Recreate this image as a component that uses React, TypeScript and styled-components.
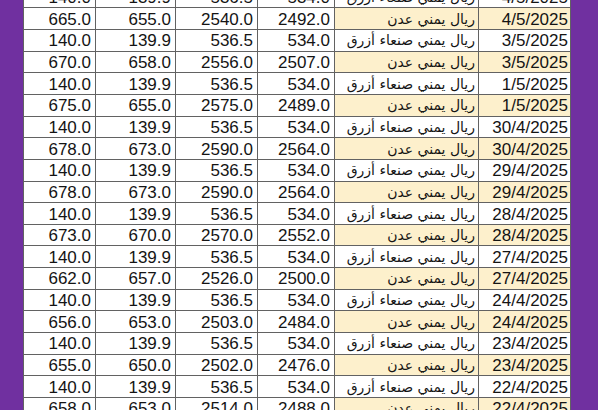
import * as React from 'react'
import styled, { createGlobalStyle } from 'styled-components'

const Global = createGlobalStyle`
  html, body {
    margin: 0;
    padding: 0;
    background: #7030a0;
    overflow: hidden;
  }
`

const Page = styled.div`
  height: 410px;
  overflow: hidden;
  padding: 0 28px 0 23px;
`

const Table = styled.table`
  border-collapse: collapse;
  table-layout: fixed;
  width: 547px;
  margin-top: -14.4px;
  background: #ffffff;
  font-family: "Liberation Sans", Arial, sans-serif;
  font-size: 17px;
  color: #141414;
`

const Row = styled.tr`
  height: 21.67px;
`

const Cell = styled.td<{ $hl?: boolean }>`
  border: 1.5px solid #626262;
  padding: 1px 4px 0 0;
  text-align: right;
  line-height: 19px;
  white-space: nowrap;
  overflow: hidden;
  background: ${p => (p.$hl ? '#fdf0cc' : '#ffffff')};
`

const NameCell = styled(Cell)`
  font-family: "DejaVu Sans", "Noto Sans", sans-serif;
  font-size: 14px;
  padding-right: 3px;
`

const DateCell = styled(Cell)`
  padding-right: 2px;
`

const widths = [72, 80, 82, 77, 144, 92]

const blue = ['140.0', '139.9', '536.5', '534.0']

const aden: [string, string[]][] = [
  ['4/5/2025', ['665.0', '655.0', '2540.0', '2492.0']],
  ['3/5/2025', ['670.0', '658.0', '2556.0', '2507.0']],
  ['1/5/2025', ['675.0', '655.0', '2575.0', '2489.0']],
  ['30/4/2025', ['678.0', '673.0', '2590.0', '2564.0']],
  ['29/4/2025', ['678.0', '673.0', '2590.0', '2564.0']],
  ['28/4/2025', ['673.0', '670.0', '2570.0', '2552.0']],
  ['27/4/2025', ['662.0', '657.0', '2526.0', '2500.0']],
  ['24/4/2025', ['656.0', '653.0', '2503.0', '2484.0']],
  ['23/4/2025', ['655.0', '650.0', '2502.0', '2476.0']],
  ['22/4/2025', ['658.0', '653.0', '2514.0', '2488.0']],
]

const rows = aden.flatMap(([date, values]) => [
  { date, name: 'ريال يمني صنعاء أزرق', values: blue, hl: false },
  { date, name: 'ريال يمني عدن', values, hl: true },
])

export default () => (
  <>
    <Global />
    <Page>
      <Table>
        <colgroup>
          {widths.map((w, i) => <col key={i} style={{ width: w }} />)}
        </colgroup>
        <tbody>
          {rows.map((r, i) => (
            <Row key={i}>
              {r.values.map((v, j) => <Cell key={j}>{v}</Cell>)}
              <NameCell $hl={r.hl} dir='rtl'>{r.name}</NameCell>
              <DateCell $hl={r.hl}>{r.date}</DateCell>
            </Row>
          ))}
        </tbody>
      </Table>
    </Page>
  </>
)
